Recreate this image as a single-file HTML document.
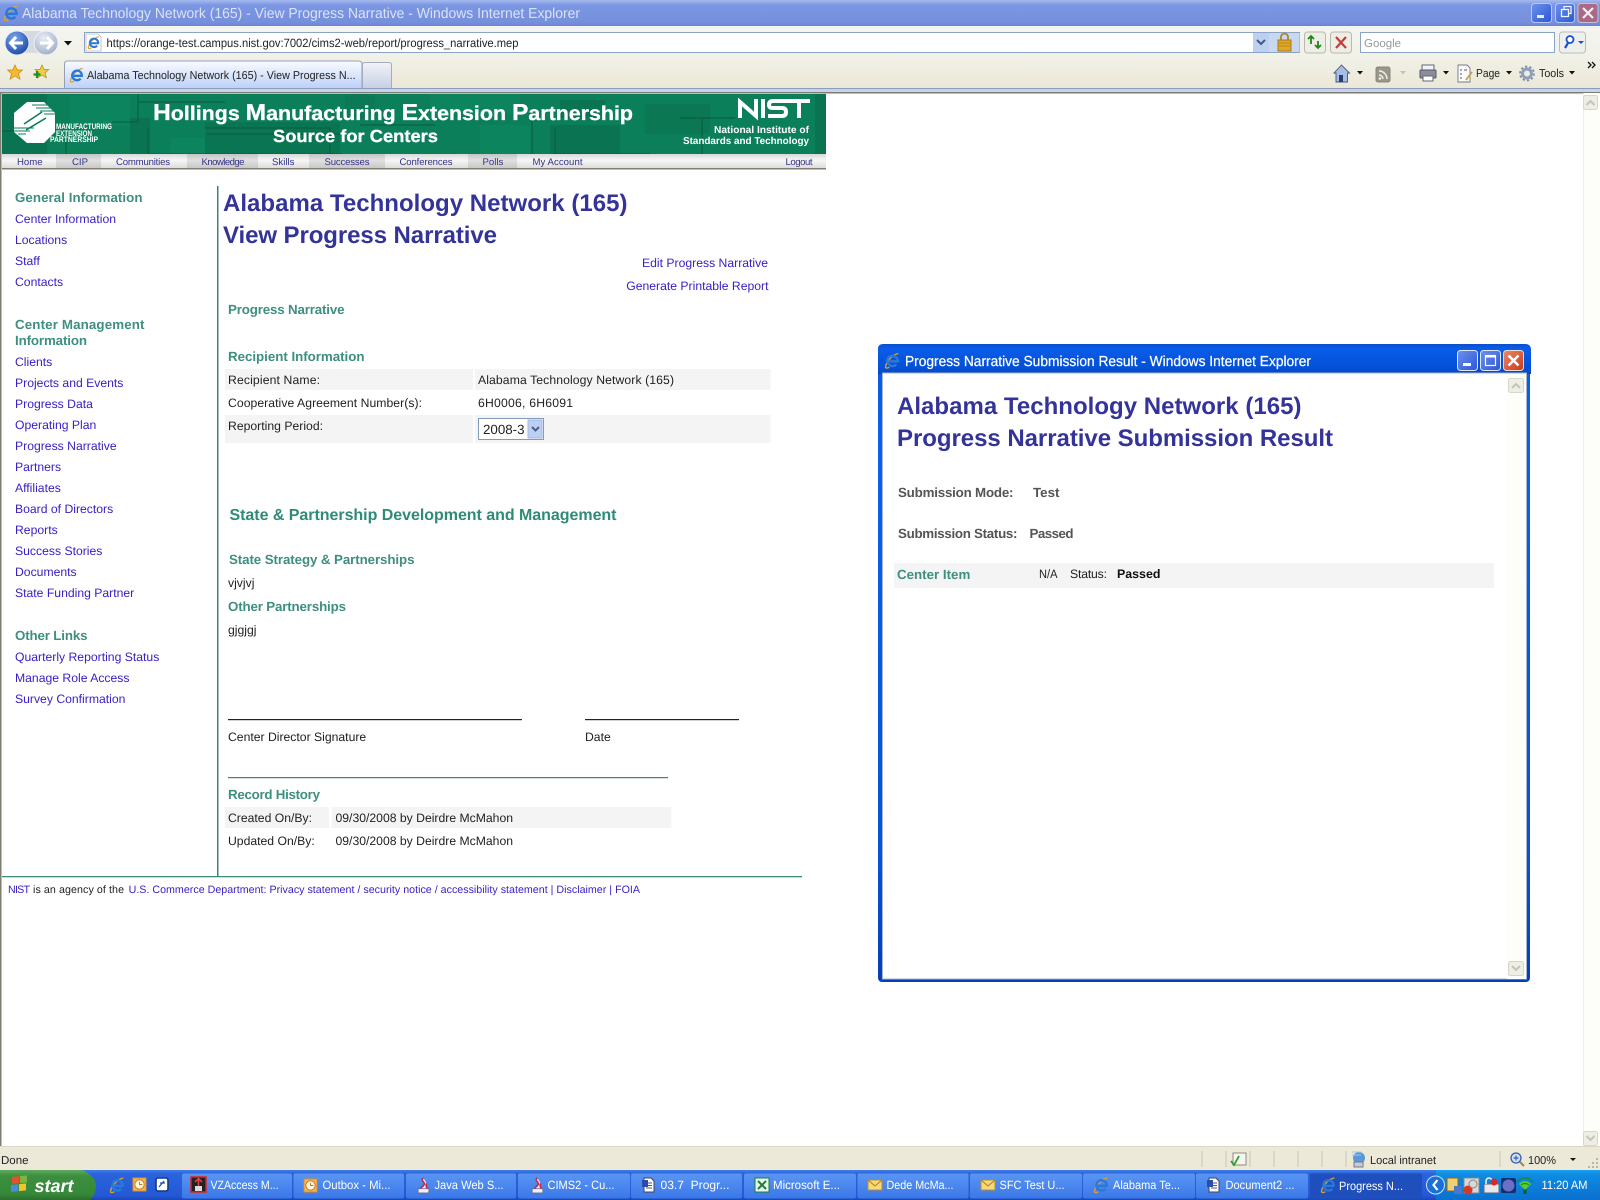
<!DOCTYPE html>
<html><head><meta charset="utf-8"><title>Alabama Technology Network (165) - View Progress Narrative</title>
<style>
html,body{margin:0;padding:0;background:#fff;width:1600px;height:1200px;overflow:hidden}
svg{display:block;font-family:"Liberation Sans",Arial,sans-serif;text-rendering:geometricPrecision}
.l{font-size:12.2px;fill:#3a22c4}
.h{font-size:13.33px;font-weight:bold;fill:#3f8f80}
.b{font-size:12.2px;fill:#222}
.t1{font-size:24px;font-weight:bold;fill:#333399}
.n{font-size:9.6px;fill:#333388}
.f{font-size:10.67px;fill:#3a22c4}
.c{font-size:11.5px;fill:#222}
.tb{font-size:12px;fill:#fff}
.g{font-size:13.33px;font-weight:bold;fill:#555}
.hw{font-weight:bold;fill:#fff}
</style></head><body>
<svg width="1600" height="1200" viewBox="0 0 1600 1200" xmlns="http://www.w3.org/2000/svg">
<defs>
<linearGradient id="title" x1="0" y1="0" x2="0" y2="1"><stop offset="0" stop-color="#a5baee"/><stop offset=".2" stop-color="#7b96e2"/><stop offset=".85" stop-color="#7690de"/><stop offset="1" stop-color="#6a84d2"/></linearGradient>
<linearGradient id="bar" x1="0" y1="0" x2="0" y2="1"><stop offset="0" stop-color="#f4f5f1"/><stop offset=".5" stop-color="#f1f1e8"/><stop offset="1" stop-color="#ebe8d7"/></linearGradient>
<linearGradient id="tab" x1="0" y1="0" x2="0" y2="1"><stop offset="0" stop-color="#fafbff"/><stop offset=".55" stop-color="#d9e5fb"/><stop offset="1" stop-color="#bcd2f8"/></linearGradient>
<linearGradient id="tab2" x1="0" y1="0" x2="0" y2="1"><stop offset="0" stop-color="#f2f3f7"/><stop offset="1" stop-color="#c8d0e6"/></linearGradient>
<linearGradient id="task" x1="0" y1="0" x2="0" y2="1"><stop offset="0" stop-color="#3f7fe8"/><stop offset=".12" stop-color="#2a63dc"/><stop offset=".85" stop-color="#2459d6"/><stop offset="1" stop-color="#1c46b8"/></linearGradient>
<linearGradient id="tbtn" x1="0" y1="0" x2="0" y2="1"><stop offset="0" stop-color="#5a95f4"/><stop offset="1" stop-color="#3a78e8"/></linearGradient>
<linearGradient id="tray" x1="0" y1="0" x2="0" y2="1"><stop offset="0" stop-color="#1ba0ef"/><stop offset=".15" stop-color="#0f8be2"/><stop offset="1" stop-color="#0a70d0"/></linearGradient>
<linearGradient id="start" x1="0" y1="0" x2="0" y2="1"><stop offset="0" stop-color="#5fa85f"/><stop offset=".2" stop-color="#3b8f3e"/><stop offset=".8" stop-color="#37893a"/><stop offset="1" stop-color="#2a6e2e"/></linearGradient>
<linearGradient id="pop" x1="0" y1="0" x2="0" y2="1"><stop offset="0" stop-color="#0a5ae0"/><stop offset=".15" stop-color="#0a60ee"/><stop offset=".8" stop-color="#0453d8"/><stop offset="1" stop-color="#0340b8"/></linearGradient>
<linearGradient id="popt" x1="0" y1="0" x2="0" y2="1"><stop offset="0" stop-color="#0a4fd0"/><stop offset=".15" stop-color="#0a5ce8"/><stop offset=".8" stop-color="#0450d8"/><stop offset="1" stop-color="#0646c4"/></linearGradient>
<linearGradient id="nav" x1="0" y1="0" x2="0" y2="1"><stop offset="0" stop-color="#d8d8d8"/><stop offset=".45" stop-color="#f6f6f6"/><stop offset="1" stop-color="#dcdcdc"/></linearGradient>
<linearGradient id="nav2" x1="0" y1="0" x2="0" y2="1"><stop offset="0" stop-color="#c4c4c4"/><stop offset=".45" stop-color="#e0e0e0"/><stop offset="1" stop-color="#c8c8c8"/></linearGradient>
<linearGradient id="wb" x1="0" y1="0" x2="1" y2="1"><stop offset="0" stop-color="#6f92ec"/><stop offset="1" stop-color="#2a55d8"/></linearGradient>
<linearGradient id="wr" x1="0" y1="0" x2="1" y2="1"><stop offset="0" stop-color="#ec8a66"/><stop offset="1" stop-color="#c83a1c"/></linearGradient>
<radialGradient id="back" cx=".4" cy=".3" r=".8"><stop offset="0" stop-color="#7aa6ee"/><stop offset="1" stop-color="#123f9e"/></radialGradient>
<radialGradient id="fwd" cx=".4" cy=".3" r=".8"><stop offset="0" stop-color="#e8edf6"/><stop offset="1" stop-color="#9aa8c4"/></radialGradient>
<symbol id="ie" viewBox="0 0 16 16"><path d="M13.500 1.500C9 2 2.500 8 1.500 13.500C1 15.500 3 15.500 5 14.300" fill="none" stroke="#e0a030" stroke-width="1.300"/><path d="M4.600 8.800H12.800A4.800 4.800 0 1 0 11.600 11.600" fill="none" stroke="#2a78d8" stroke-width="2.300"/></symbol>
<symbol id="doc" viewBox="0 0 16 16"><path d="M3 1H10L13 4V15H3Z" fill="#fff" stroke="#445" stroke-width="1"/><path d="M5 6H11M5 8.500H11M5 11H11" stroke="#557" stroke-width="1"/><rect x="1" y="3" width="6" height="7" fill="#2a4ea8"/></symbol>
<symbol id="java" viewBox="0 0 16 16"><path d="M8 1C4 3 11 5 8 8C6 10 4 11 5 14H11C13 11 9 9 11 6" fill="#f8e8ec" stroke="#c02848" stroke-width="1.500"/><rect x="3" y="11" width="10" height="4" fill="#eef" stroke="#668" stroke-width=".7"/></symbol>
<symbol id="mail" viewBox="0 0 16 16"><rect x="1" y="3" width="14" height="10" fill="#f8d878" stroke="#b89030"/><path d="M1 3L8 9L15 3" fill="none" stroke="#a88020"/></symbol>
<symbol id="ol" viewBox="0 0 16 16"><rect x="1" y="1" width="14" height="14" fill="#f6b450" stroke="#d88820"/><circle cx="8" cy="8" r="5" fill="#fff6e0" stroke="#c07818"/><path d="M8 5V8H11" stroke="#c07818" fill="none"/></symbol>
</defs>

<!-- window chrome -->
<rect width="1600" height="1200" fill="#fff"/>
<rect width="1600" height="26" fill="url(#title)"/>
<use href="#ie" x="3" y="4" width="17" height="18"/>
<text x="22" y="18" font-size="14.500" fill="#d9e3f8" textLength="558" lengthAdjust="spacingAndGlyphs">Alabama Technology Network (165) - View Progress Narrative - Windows Internet Explorer</text>
<!-- win buttons -->
<rect x="1531.500" y="3.500" width="20" height="19" rx="3" fill="url(#wb)" stroke="#b9c8f2"/><rect x="1537" y="15" width="7" height="3" fill="#e8eefc"/>
<rect x="1555.500" y="3.500" width="19" height="19" rx="3" fill="url(#wb)" stroke="#b9c8f2"/><path d="M1561.500 9.500h7v7h-7zM1564 9V6.500h7v7h-2" fill="none" stroke="#f0f4ff" stroke-width="1.300"/>
<rect x="1578" y="3.500" width="20" height="19" rx="3" fill="#a86a86" stroke="#c8bfd8"/><path d="M1583 8L1593 18M1593 8L1583 18" stroke="#f4eef2" stroke-width="2.200"/>

<rect y="26" width="1600" height="62" fill="url(#bar)"/>
<!-- nav buttons -->
<rect x="14" y="31" width="36" height="22" rx="11" fill="#d6dae0"/>
<circle cx="17" cy="43" r="12" fill="url(#back)" stroke="#e4ecf8"/>
<path d="M23 43H11M16 37L10.500 43L16 49" fill="none" stroke="#fff" stroke-width="3"/>
<circle cx="46" cy="43" r="12" fill="url(#fwd)" stroke="#eef1f6"/>
<path d="M40 43H52M47 37L52.500 43L47 49" fill="none" stroke="#fff" stroke-width="3"/>
<path d="M64 41h8l-4 4.500z" fill="#111"/>
<!-- address -->
<rect x="84.500" y="32.500" width="1215" height="20" fill="#fff" stroke="#8ba3c4"/>
<path d="M86 34h12l3 3v14H86z" fill="#fff" stroke="#99a" stroke-width=".6"/>
<use href="#ie" x="87" y="35" width="14" height="15"/>
<text x="106.500" y="47" font-size="12" fill="#222" textLength="412" lengthAdjust="spacingAndGlyphs">https://orange-test.campus.nist.gov:7002/cims2-web/report/progress_narrative.mep</text>
<rect x="1253" y="33" width="16" height="19" fill="#bcd0f2"/><path d="M1257 40l4 4l4-4" fill="none" stroke="#445a80" stroke-width="2"/>
<rect x="1269" y="33" width="30.500" height="19" fill="#c8d8ef"/>
<rect x="1278" y="40" width="13" height="11" fill="#e0a828" stroke="#a87818"/><path d="M1281 40v-3a3.500 3.500 0 0 1 7 0v3" fill="none" stroke="#b08428" stroke-width="1.800"/><path d="M1279 43h11M1279 46h11" stroke="#b88818"/>
<rect x="1304.500" y="32" width="21" height="21" rx="3" fill="#eeeee6" stroke="#b8b8ac"/>
<path d="M1311 37v7M1308 39l3-3 3 3" fill="none" stroke="#1a8a1a" stroke-width="1.800"/><path d="M1318 48v-7M1315 45l3 3 3-3" fill="none" stroke="#1a8a1a" stroke-width="1.800"/>
<rect x="1330.500" y="32" width="21" height="21" rx="3" fill="#eeeee6" stroke="#b8b8ac"/>
<path d="M1336 37L1346 48M1346 37L1336 48" stroke="#c83a3a" stroke-width="2.200"/>
<rect x="1360.500" y="32.500" width="194" height="20" fill="#fff" stroke="#8ba3c4"/>
<text x="1364" y="47" font-size="11.500" fill="#999">Google</text>
<rect x="1559.500" y="32" width="26" height="21" rx="3" fill="#eef0ec" stroke="#b8bcc0"/>
<circle cx="1570" cy="39.500" r="3.500" fill="#fff" stroke="#1a50d0" stroke-width="1.800"/><path d="M1568 43l-3 5" stroke="#1a50d0" stroke-width="2.200"/><path d="M1578 41h6l-3 3z" fill="#1a50d0"/>
<!-- fav -->
<path d="M15 65l2.300 5h5.200l-4 3.600 1.500 5.600-5-3.200-5 3.200 1.500-5.600-4-3.600h5.200z" fill="#f2ba2c" stroke="#c88818" stroke-width=".7"/>
<path d="M42 65l2 4.500h4.800l-3.800 3.300 1.400 5-4.400-2.800-4.400 2.800 1.400-5-3.800-3.300h4.800z" fill="#f2ce44" stroke="#a89018" stroke-width=".7"/><path d="M37 71v7M33.500 74.500h7" stroke="#1c9028" stroke-width="2.200"/>
<!-- tabs -->
<path d="M64.500 88V64q0-3 3-3H358q4 0 4 3V88" fill="url(#tab)" stroke="#95a0b4"/>
<path d="M362.500 88V65q0-2.500 2.500-2.500H389q2.500 0 2.500 2.500V88" fill="url(#tab2)" stroke="#a4acc0"/>
<use href="#ie" x="69" y="67" width="16" height="16"/>
<text x="87" y="79" class="c" font-size="12" textLength="268.600" lengthAdjust="spacingAndGlyphs">Alabama Technology Network (165) - View Progress N...</text>
<!-- cmd bar -->
<path d="M1334 73l7.500-8 8 8h-2v9H1336v-9z" fill="#a8bde6" stroke="#44587c" stroke-width=".9"/><rect x="1339" y="75" width="4" height="7" fill="#24406e"/>
<path d="M1357 71h6l-3 3.500z" fill="#111"/>
<rect x="1376" y="67" width="14" height="15" rx="2" fill="#99978a" stroke="#88867a"/><path d="M1379 71a8 8 0 0 1 8 8M1379 75a4 4 0 0 1 4 4" fill="none" stroke="#f0f0e8" stroke-width="1.500"/><circle cx="1380" cy="78.500" r="1.300" fill="#f0f0e8"/>
<path d="M1400 71h6l-3 3.500z" fill="#c4c2b4"/>
<rect x="1422" y="65" width="12" height="6" fill="#f2f2f4" stroke="#667"/><rect x="1420" y="70" width="16" height="8" rx="1" fill="#8a8e9c" stroke="#556"/><rect x="1423" y="76" width="10" height="5" fill="#fff" stroke="#667"/>
<path d="M1443 71h6l-3 3.500z" fill="#111"/>
<path d="M1458 65h9l3 3v14h-12z" fill="#fafafa" stroke="#778" stroke-width=".9"/><path d="M1460 70h2M1460 74h2M1460 78h2M1464 70h3" stroke="#557"/><path d="M1466 80l6-8" stroke="#c8a040" stroke-width="1.800"/>
<text x="1476" y="77" font-size="11.500" fill="#222" textLength="24" lengthAdjust="spacingAndGlyphs">Page</text>
<path d="M1506 71h6l-3 3.500z" fill="#111"/>
<circle cx="1527" cy="73.500" r="4.500" fill="none" stroke="#8ea0b8" stroke-width="3"/><circle cx="1527" cy="73.500" r="7" fill="none" stroke="#7a8ca4" stroke-width="1.800" stroke-dasharray="2.200 2.200"/>
<text x="1539" y="77" font-size="11.500" fill="#222" textLength="25" lengthAdjust="spacingAndGlyphs">Tools</text>
<path d="M1569 71h6l-3 3.500z" fill="#111"/>
<path d="M1588 62l3 3-3 3M1592 62l3 3-3 3" fill="none" stroke="#111" stroke-width="1.300"/>
<rect y="88" width="1600" height="1" fill="#8c9dbb"/>
<rect y="89" width="1600" height="3" fill="#c6d2ee"/>
<rect y="92" width="1600" height="1.500" fill="#807c70"/>
<rect y="93" width="1.500" height="1054" fill="#807c70"/>

<!-- scrollbar -->
<rect x="1583" y="93" width="17" height="1054" fill="#fdfdfa"/>
<rect x="1583" y="93" width="1" height="1054" fill="#f0efe6"/>
<rect x="1583.500" y="95.500" width="14" height="14" rx="2" fill="#eeeee4" stroke="#d6d6cc"/><path d="M1586.500 105l4-4 4 4" fill="none" stroke="#c4c4b8" stroke-width="2"/>
<rect x="1583.500" y="1131.500" width="14" height="14" rx="2" fill="#eeeee4" stroke="#d6d6cc"/><path d="M1586.500 1136l4 4 4-4" fill="none" stroke="#c4c4b8" stroke-width="2"/>

<!-- header -->
<rect x="2" y="94" width="824" height="60" fill="#0a7f59"/>
<g fill="#0a7452"><rect x="2" y="94" width="45" height="60"/><rect x="130" y="118" width="20" height="36"/><rect x="205" y="122" width="135" height="32" fill="#0a7552"/><rect x="345" y="94" width="30" height="25" fill="#0b7955"/><rect x="550" y="125" width="70" height="29"/><rect x="560" y="100" width="45" height="18"/><rect x="645" y="104" width="65" height="30" fill="#0b7753"/><rect x="815" y="94" width="11" height="60"/></g>
<g fill="#0c855e"><rect x="70" y="96" width="60" height="30"/><rect x="430" y="94" width="90" height="20"/><rect x="480" y="125" width="50" height="29"/><rect x="170" y="138" width="35" height="16"/></g>
<g stroke="#0a5a3e" stroke-width="1" fill="none"><path d="M138 94V122H112M138 102H225M148 128V154H342M207 134H345M148 134V154M205 128H330V154M532 118V154M555 128V154H650M680 118H735M702 118V154M360 125H435"/><path d="M2 131H40M66 130V154"/></g>
<!-- MEP logo -->
<path d="M27 102H44L55 113V132L44 143H27L14 132V113Z" fill="#fff"/>
<g stroke="#0a7d58" stroke-width="1"><path d="M32 105H55M36 108H55M40 111H55M44 114H55"/><path d="M14 128H34M14 131H30M18 134H26"/><path d="M24 124L42 112M26 130L46 118" stroke-width="1.600"/></g>
<g class="hw" font-size="8"><text x="56" y="129" textLength="56" lengthAdjust="spacingAndGlyphs">MANUFACTURING</text><text x="56" y="136" textLength="36" lengthAdjust="spacingAndGlyphs">EXTENSION</text><text x="50" y="142" textLength="48" lengthAdjust="spacingAndGlyphs">PARTNERSHIP</text></g>
<text x="153" y="120" class="hw" font-size="20" stroke="#fff" stroke-width=".3" textLength="480" lengthAdjust="spacingAndGlyphs"><tspan font-size="23">H</tspan>ollings <tspan font-size="23">M</tspan>anufacturing <tspan font-size="23">E</tspan>xtension <tspan font-size="23">P</tspan>artnership</text>
<text x="273" y="142" class="hw" font-size="17.500" stroke="#fff" stroke-width=".3" textLength="165" lengthAdjust="spacingAndGlyphs">Source for Centers</text>
<!-- NIST -->
<g fill="none" stroke="#fff" stroke-width="4"><path d="M740 118V102L756 116V99"/><path d="M763 99V118"/><path d="M789 101H773Q769 101 769 105Q769 108 773 108H782Q786 108 786 112Q786 116 782 116H768"/><path d="M789 101H810M799 101V118"/></g>
<text x="809" y="133" text-anchor="end" class="hw" font-size="10" textLength="95" lengthAdjust="spacingAndGlyphs">National Institute of</text>
<text x="809" y="144" text-anchor="end" class="hw" font-size="10" textLength="126" lengthAdjust="spacingAndGlyphs">Standards and Technology</text>
<!-- nav -->
<rect x="2" y="154" width="824" height="14" fill="url(#nav)"/>
<g fill="url(#nav2)"><rect x="56" y="154" width="45" height="14"/><rect x="187" y="154" width="71" height="14"/><rect x="309" y="154" width="76" height="14"/><rect x="468" y="154" width="49" height="14"/></g>
<rect x="2" y="168" width="824" height="1.500" fill="#807c70"/>
<g class="n"><text x="17" y="165">Home</text><text x="72" y="165">CIP</text><text x="116" y="165" textLength="54">Communities</text><text x="201.500" y="165" textLength="43">Knowledge</text><text x="272" y="165">Skills</text><text x="324.500" y="165" textLength="45">Successes</text><text x="399.500" y="165" textLength="53">Conferences</text><text x="482.500" y="165">Polls</text><text x="532.500" y="165" textLength="50">My Account</text><text x="785.500" y="165" textLength="27">Logout</text></g>

<!-- sidebar -->
<text x="15" y="202" class="h" textLength="127.500">General Information</text>
<g class="l">
<text x="15" y="223" textLength="101">Center Information</text><text x="15" y="244">Locations</text><text x="15" y="265">Staff</text><text x="15" y="286">Contacts</text>
<text x="15" y="366">Clients</text><text x="15" y="387">Projects and Events</text><text x="15" y="408">Progress Data</text><text x="15" y="429">Operating Plan</text><text x="15" y="450">Progress Narrative</text><text x="15" y="471">Partners</text><text x="15" y="492">Affiliates</text><text x="15" y="513">Board of Directors</text><text x="15" y="534">Reports</text><text x="15" y="555">Success Stories</text><text x="15" y="576">Documents</text><text x="15" y="597">State Funding Partner</text>
<text x="15" y="661">Quarterly Reporting Status</text><text x="15" y="682">Manage Role Access</text><text x="15" y="703">Survey Confirmation</text>
</g>
<text x="15" y="329" class="h" textLength="129.500">Center Management</text><text x="15" y="345" class="h" textLength="72">Information</text>
<text x="15" y="640" class="h" textLength="72.500">Other Links</text>
<rect x="217" y="186" width="1.500" height="690" fill="#3f8470"/>

<!-- main -->
<text x="223" y="211" class="t1" textLength="404.500">Alabama Technology Network (165)</text>
<text x="223" y="243" class="t1" textLength="274">View Progress Narrative</text>
<text x="768" y="267" class="l" text-anchor="end">Edit Progress Narrative</text>
<text x="768.500" y="290" class="l" text-anchor="end">Generate Printable Report</text>
<text x="228" y="314" class="h" textLength="116.500">Progress Narrative</text>
<text x="228" y="361" class="h" textLength="136.500">Recipient Information</text>
<rect x="225" y="369" width="248" height="21" fill="#f4f4f4"/><rect x="475" y="369" width="295.500" height="21" fill="#f4f4f4"/>
<rect x="225" y="415" width="248" height="28" fill="#f4f4f4"/><rect x="475" y="415" width="295.500" height="28" fill="#f4f4f4"/>
<g class="b"><text x="228" y="384" textLength="92">Recipient Name:</text><text x="478" y="384" textLength="196">Alabama Technology Network (165)</text><text x="228" y="407" textLength="194">Cooperative Agreement Number(s):</text><text x="478" y="407" textLength="95">6H0006, 6H6091</text><text x="228" y="430" textLength="95">Reporting Period:</text></g>
<rect x="478.500" y="418.500" width="65" height="21" fill="#fff" stroke="#7f9db9"/>
<text x="483" y="434" font-size="13.330" fill="#222">2008-3</text>
<rect x="528" y="420" width="14" height="18" fill="#bcd0f4" stroke="#a4b8e0"/><path d="M532 427l3.500 3.500 3.500-3.500" fill="none" stroke="#4a5f85" stroke-width="2"/>
<text x="229.500" y="520" font-size="16" font-weight="bold" fill="#2f8a78" textLength="387">State &amp; Partnership Development and Management</text>
<text x="229" y="564" class="h" textLength="185.500">State Strategy &amp; Partnerships</text>
<text x="228" y="587" class="b">vjvjvj</text>
<text x="228" y="611" class="h" textLength="118">Other Partnerships</text>
<text x="228" y="634" class="b">gjgjgj</text>
<rect x="228" y="719" width="294" height="1.200" fill="#222"/><rect x="585" y="719" width="154" height="1.200" fill="#222"/>
<text x="228" y="741" class="b">Center Director Signature</text><text x="585" y="741" class="b">Date</text>
<rect x="228" y="777" width="440" height="1.200" fill="#3f8470"/>
<text x="228" y="799" class="h" textLength="92">Record History</text>
<rect x="225" y="807" width="104" height="21" fill="#f4f4f4"/><rect x="331.500" y="807" width="340" height="21" fill="#f4f4f4"/>
<g class="b"><text x="228" y="822">Created On/By:</text><text x="335.500" y="822">09/30/2008 by Deirdre McMahon</text><text x="228" y="845">Updated On/By:</text><text x="335.500" y="845">09/30/2008 by Deirdre McMahon</text></g>
<rect x="2" y="876" width="800" height="1.300" fill="#3f8f78"/>
<g class="f"><text x="8" y="893" textLength="22">NIST</text><text x="33" y="893" fill="#222" style="fill:#222" textLength="91">is an agency of the</text><text x="128.600" y="893" textLength="511.400">U.S. Commerce Department: Privacy statement / security notice / accessibility statement | Disclaimer | FOIA</text></g>

<!-- popup -->
<rect x="878" y="345" width="652" height="637" rx="4" fill="url(#pop)"/>
<path d="M878 349q0-5 5-5H1525q6 0 6 6V374H878Z" fill="url(#popt)"/>
<rect x="882.500" y="373" width="644" height="606" fill="#fff" stroke="#a8b4c8"/>
<use href="#ie" x="884" y="352" width="17" height="17"/>
<text x="905" y="366" font-size="14.500" fill="#fff" stroke="#fff" stroke-width=".25" textLength="406" lengthAdjust="spacingAndGlyphs">Progress Narrative Submission Result - Windows Internet Explorer</text>
<rect x="1457.500" y="350.500" width="20" height="20" rx="3" fill="url(#wb)" stroke="#dfe8fa"/><rect x="1463" y="363" width="8" height="3" fill="#fff"/>
<rect x="1480.500" y="350.500" width="20" height="20" rx="3" fill="url(#wb)" stroke="#dfe8fa"/><rect x="1485.500" y="355.500" width="10" height="10" fill="none" stroke="#fff" stroke-width="1.200"/><rect x="1485" y="355" width="11" height="2.500" fill="#fff"/>
<rect x="1503.500" y="350.500" width="20" height="20" rx="3" fill="url(#wr)" stroke="#f0dcd4"/><path d="M1508.500 355.500L1518.500 365.500M1518.500 355.500L1508.500 365.500" stroke="#fff" stroke-width="2.500"/>
<rect x="1507" y="374" width="19" height="605" fill="#fdfdf9"/>
<rect x="1508.500" y="378.500" width="15" height="14" rx="2" fill="#eeeee4" stroke="#d6d6cc"/><path d="M1512 388l4-4 4 4" fill="none" stroke="#c4c4b8" stroke-width="2"/>
<rect x="1508.500" y="961.500" width="15" height="14" rx="2" fill="#eeeee4" stroke="#d6d6cc"/><path d="M1512 966l4 4 4-4" fill="none" stroke="#c4c4b8" stroke-width="2"/>
<text x="897" y="414" class="t1" textLength="404.500">Alabama Technology Network (165)</text>
<text x="897" y="446" class="t1" textLength="436">Progress Narrative Submission Result</text>
<text x="898" y="497" class="g" textLength="115.500">Submission Mode:</text><text x="1033" y="497" class="g">Test</text>
<text x="898" y="538" class="g" textLength="119.500">Submission Status:</text><text x="1029.500" y="538" class="g" textLength="44">Passed</text>
<rect x="894" y="563" width="600" height="25" fill="#f4f4f4"/>
<text x="897" y="579" class="h">Center Item</text>
<text x="1039" y="578" class="b" textLength="18.500" lengthAdjust="spacingAndGlyphs">N/A</text><text x="1070" y="578" class="b" textLength="37">Status:</text><text x="1117" y="578" font-size="12.400" font-weight="bold" fill="#111">Passed</text>

<!-- status bar -->
<rect y="1146" width="1600" height="1.500" fill="#dcd8c6"/>
<rect y="1147" width="1600" height="23" fill="#ece9d8"/>
<text x="1" y="1164" font-size="11.500" fill="#222">Done</text>
<g fill="#c8c5b4"><rect x="1201.500" y="1151" width="1" height="16"/><rect x="1225.500" y="1151" width="1" height="16"/><rect x="1249.500" y="1151" width="1" height="16"/><rect x="1273.500" y="1151" width="1" height="16"/><rect x="1297.500" y="1151" width="1" height="16"/><rect x="1321.500" y="1151" width="1" height="16"/><rect x="1345.500" y="1151" width="1" height="16"/><rect x="1499.500" y="1151" width="1" height="16"/></g>
<rect x="1233" y="1153" width="13" height="12" fill="#f6f6ee" stroke="#8a8a80"/><path d="M1231 1161l3 4 5-9" fill="none" stroke="#28a028" stroke-width="1.800"/>
<circle cx="1359" cy="1158" r="6" fill="#5a98d8"/><path d="M1352 1152h9M1352 1155h9" stroke="#a4c8e8"/><rect x="1354" y="1162" width="9" height="5" fill="#c4ccd4" stroke="#778"/>
<text x="1370" y="1164" font-size="11.500" fill="#222" textLength="66" lengthAdjust="spacingAndGlyphs">Local intranet</text>
<circle cx="1516" cy="1158" r="5" fill="#cfe0f8" stroke="#3460b0" stroke-width="1.300"/><path d="M1513.500 1158h5M1516 1155.500v5" stroke="#3460b0" stroke-width="1.200"/><path d="M1520 1162l4 4" stroke="#a08848" stroke-width="2"/>
<text x="1528" y="1164" font-size="11.500" fill="#222" textLength="28" lengthAdjust="spacingAndGlyphs">100%</text>
<path d="M1570 1158h6l-3 3z" fill="#111"/>
<g fill="#b8b5a4"><rect x="1596" y="1166" width="2" height="2"/><rect x="1592" y="1166" width="2" height="2"/><rect x="1588" y="1166" width="2" height="2"/><rect x="1596" y="1162" width="2" height="2"/><rect x="1592" y="1162" width="2" height="2"/><rect x="1596" y="1158" width="2" height="2"/></g>

<!-- taskbar -->
<rect y="1170" width="1600" height="30" fill="url(#task)"/>
<path d="M0 1170H82Q96 1176 96 1186Q96 1194 90 1200H0Z" fill="url(#start)"/>
<g transform="translate(11 1176) skewY(-6)"><rect x="1" y="1" width="7" height="7" fill="#e0542c"/><rect x="9" y="1" width="7" height="7" fill="#7cb642"/><rect x="0" y="9" width="7" height="7" fill="#4a8ae0"/><rect x="8" y="9" width="7" height="7" fill="#f2c230"/></g>
<text x="34.500" y="1192" font-size="18" font-weight="bold" font-style="italic" fill="#fff" textLength="39" lengthAdjust="spacingAndGlyphs">start</text>
<use href="#ie" x="109" y="1176" width="17" height="18"/>
<use href="#ol" x="132" y="1177" width="15" height="15"/>
<rect x="156" y="1178" width="12" height="13" rx="2" fill="#fff" stroke="#123a88" stroke-width="1.600"/><path d="M159 1187l5-6M160 1183h5" stroke="#1c50b0" stroke-width="1.300"/>
<g fill="url(#tbtn)">
<rect x="182" y="1173.500" width="110" height="25" rx="2"/><rect x="293.500" y="1173.500" width="110.500" height="25" rx="2"/><rect x="406" y="1173.500" width="110" height="25" rx="2"/><rect x="518" y="1173.500" width="112" height="25" rx="2"/><rect x="631" y="1173.500" width="111" height="25" rx="2"/><rect x="744" y="1173.500" width="112" height="25" rx="2"/><rect x="857.500" y="1173.500" width="111" height="25" rx="2"/><rect x="970" y="1173.500" width="112" height="25" rx="2"/><rect x="1083" y="1173.500" width="112" height="25" rx="2"/><rect x="1196" y="1173.500" width="112" height="25" rx="2"/></g>
<rect x="1310" y="1173.500" width="112" height="25" rx="2" fill="#1e4fbc"/>
<rect x="191" y="1177" width="15" height="15" fill="#222" stroke="#e02020" stroke-width="1.500"/><path d="M198.500 1186v-7M195 1182l3.500-3.500 3.500 3.500" fill="none" stroke="#f04040" stroke-width="1.500"/><rect x="195" y="1186" width="7" height="5" fill="#ddd"/>
<use href="#ol" x="303" y="1178" width="15" height="15"/>
<use href="#java" x="415" y="1177" width="17" height="17"/><use href="#java" x="529" y="1177" width="17" height="17"/>
<use href="#doc" x="641" y="1177" width="16" height="16"/>
<rect x="755" y="1178" width="14" height="14" fill="#e8f4e8" stroke="#1c7c3c"/><path d="M758 1181l8 8M766 1181l-8 8" stroke="#1c7c3c" stroke-width="2"/>
<use href="#mail" x="867" y="1177" width="16" height="16"/><use href="#mail" x="980" y="1177" width="16" height="16"/>
<use href="#ie" x="1093" y="1176" width="17" height="18"/>
<use href="#doc" x="1206" y="1177" width="16" height="16"/>
<use href="#ie" x="1320" y="1176" width="17" height="18"/>
<g class="tb">
<text x="210.500" y="1189" textLength="68" lengthAdjust="spacingAndGlyphs">VZAccess M...</text>
<text x="322.500" y="1189" textLength="68" lengthAdjust="spacingAndGlyphs">Outbox - Mi...</text>
<text x="434.500" y="1189" textLength="69" lengthAdjust="spacingAndGlyphs">Java Web S...</text>
<text x="547.500" y="1189" textLength="67" lengthAdjust="spacingAndGlyphs">CIMS2 - Cu...</text>
<text x="660.500" y="1189" textLength="69" lengthAdjust="spacingAndGlyphs">03.7&#160;&#160;Progr...</text>
<text x="773" y="1189" textLength="67" lengthAdjust="spacingAndGlyphs">Microsoft E...</text>
<text x="886.500" y="1189" textLength="67" lengthAdjust="spacingAndGlyphs">Dede McMa...</text>
<text x="999.500" y="1189" textLength="65" lengthAdjust="spacingAndGlyphs">SFC Test U...</text>
<text x="1113" y="1189" textLength="67" lengthAdjust="spacingAndGlyphs">Alabama Te...</text>
<text x="1225.500" y="1189" textLength="69" lengthAdjust="spacingAndGlyphs">Document2 ...</text>
<text x="1339" y="1190" textLength="64" lengthAdjust="spacingAndGlyphs">Progress N...</text>
</g>
<rect x="1436" y="1170" width="164" height="30" fill="url(#tray)"/>
<circle cx="1435.500" cy="1185" r="9" fill="#1a70d8" stroke="#c8e4fa"/><path d="M1437.500 1180l-4 5 4 5" fill="none" stroke="#fff" stroke-width="2.200"/>
<rect x="1447" y="1178" width="11" height="13" fill="#f0d070" stroke="#906818"/><rect x="1454" y="1186" width="8" height="8" fill="#4878c8"/>
<rect x="1464" y="1178" width="15" height="15" fill="#d8d8d8" stroke="#888"/><circle cx="1468" cy="1190" r="4.500" fill="#d83820"/><circle cx="1473" cy="1184" r="4" fill="none" stroke="#888"/>
<rect x="1484" y="1184" width="15" height="9" fill="#e8e8ec" stroke="#667"/><path d="M1486 1184v-3a3 3 0 0 1 6 0v3" fill="none" stroke="#eee" stroke-width="1.600"/><circle cx="1494" cy="1182" r="3.500" fill="#d82828"/>
<rect x="1501" y="1178" width="15" height="15" fill="#123070" rx="2"/><circle cx="1508.500" cy="1185.500" r="6" fill="#6a70c8"/>
<path d="M1525 1194V1187" stroke="#0a5a18" stroke-width="3"/><path d="M1519 1184a8 8 0 0 1 12 0l-6 6z" fill="#58d028"/><path d="M1517 1182a10 10 0 0 1 16 0M1521 1185a6 6 0 0 1 8 0" fill="none" stroke="#1c8418" stroke-width="1"/>
<text x="1541.500" y="1189" font-size="12" fill="#fff" textLength="46" lengthAdjust="spacingAndGlyphs">11:20 AM</text>
</svg>
</body></html>
